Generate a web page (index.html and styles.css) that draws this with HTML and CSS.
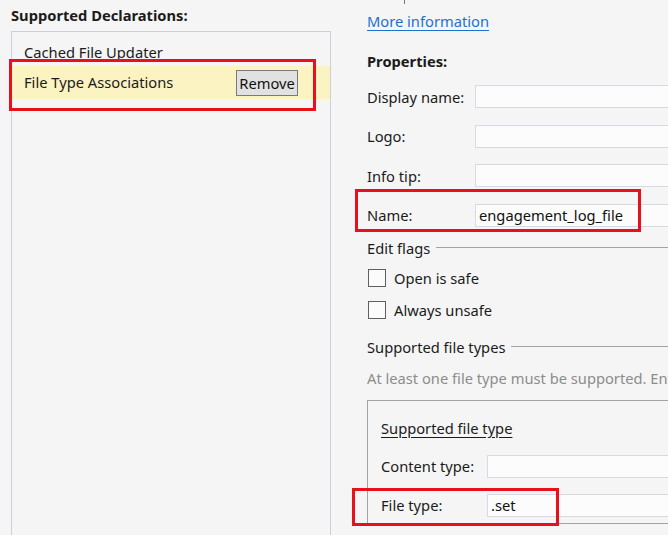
FILE: index.html
```html
<!DOCTYPE html>
<html>
<head>
<meta charset="utf-8">
<link rel="stylesheet" href="styles.css">
</head>
<body>
<div class="page">
  <div class="left">
    <div class="heading">Supported Declarations:</div>
    <div class="listbox">
      <div class="item">Cached File Updater</div>
      <div class="item selected">
        <span>File Type Associations</span>
        <button class="btn">Remove</button>
      </div>
    </div>
  </div>
  <div class="right">
    <div class="tick"></div>
    <a class="link" href="#">More information</a>
    <div class="section-title">Properties:</div>
    <div class="row"><span class="label">Display name:</span><div class="input"></div></div>
    <div class="row"><span class="label">Logo:</span><div class="input"></div></div>
    <div class="row"><span class="label">Info tip:</span><div class="input"></div></div>
    <div class="row marked-name"><span class="label">Name:</span><div class="input">engagement_log_file</div></div>
    <div class="group-title"><span>Edit flags</span><div class="rule"></div></div>
    <label class="check"><span class="box"></span>Open is safe</label>
    <label class="check"><span class="box"></span>Always unsafe</label>
    <div class="group-title types"><span>Supported file types</span><div class="rule"></div></div>
    <div class="hint">At least one file type must be supported. Enter at least one file type; for example, ".jpg".</div>
    <div class="typebox">
      <div class="typebox-title">Supported file type</div>
      <div class="row inner"><span class="label">Content type:</span><div class="input"></div></div>
      <div class="row inner marked-type"><span class="label">File type:</span><div class="input">.set</div></div>
    </div>
  </div>
</div>
</body>
</html>
```
FILE: styles.css
```css
html, body {
  margin: 0;
  padding: 0;
  background: #f5f5f5;
  overflow: hidden;
  width: 668px;
  height: 535px;
}
body {
  font-family: "Noto Sans", "Open Sans", sans-serif;
  font-size: 14.7px;
  color: #1b1b1b;
}
.page {
  display: flex;
  align-items: flex-start;
  width: 900px;
}
.left {
  width: 320px;
  padding-left: 11px;
  flex: none;
}
.heading {
  font-weight: bold;
  height: 20px;
  line-height: 20px;
  margin-top: 5px;
}
.listbox {
  margin-top: 6px;
  height: 560px;
  border: 1px solid #cfcfdc;
  box-sizing: border-box;
  padding-top: 7px;
}
.item {
  height: 33px;
  line-height: 33px;
  padding-left: 12px;
  display: flex;
  align-items: center;
  justify-content: space-between;
}
.item:first-child {
  height: 27px;
  line-height: 27px;
}
.item.selected {
  background: #fcf3c2;
  position: relative;
  padding-right: 32px;
}
.item.selected::after {
  content: "";
  position: absolute;
  left: -3px;
  top: -7px;
  width: 301px;
  height: 46px;
  border: 3px solid #e8111b;
}
.btn {
  font: inherit;
  font-size: 14.7px;
  color: #111;
  background: #e1e1e1;
  border: 1px solid #7a7a7a;
  height: 26px;
  width: 62px;
  padding: 0;
  line-height: 22px;
}
.right {
  margin-left: 36px;
  width: 480px;
  flex: none;
  display: flex;
  flex-direction: column;
  align-items: flex-start;
}
.tick {
  width: 1px;
  height: 4px;
  background: #8a6e6e;
  margin-left: 37px;
}
.link {
  color: #1a72d1;
  text-decoration: underline;
  text-underline-offset: 3px;
  line-height: 20px;
  margin-top: 7px;
}
.section-title {
  font-weight: bold;
  line-height: 20px;
  margin-top: 20px;
}
.row {
  display: flex;
  align-items: center;
  height: 23px;
  width: 100%;
  margin-top: 16.5px;
  position: relative;
}
.section-title + .row {
  margin-top: 14px;
}
.label {
  width: 108px;
  flex: none;
}
.input {
  flex: 1;
  height: 23px;
  box-sizing: border-box;
  border: 1px solid #d9d9e3;
  background: #fcfcfc;
  padding-left: 3px;
  line-height: 21px;
  color: #111;
}
.marked-name::after {
  content: "";
  position: absolute;
  left: -12px;
  top: -15px;
  width: 280px;
  height: 37px;
  border: 3px solid #e8111b;
}
.group-title {
  display: flex;
  align-items: center;
  width: 100%;
  margin-top: 11px;
  line-height: 20px;
}
.group-title .rule {
  flex: 1;
  height: 1px;
  background: #a3a3a3;
  margin-left: 6px;
}
.check {
  display: flex;
  align-items: center;
  line-height: 20px;
  height: 20px;
}
.check .box {
  width: 16px;
  height: 16px;
  border: 1px solid #5f5f5f;
  background: #fbfbfb;
  margin-right: 8px;
  margin-left: 1px;
}
.group-title + .check {
  margin-top: 10px;
}
.check + .check {
  margin-top: 12px;
}
.group-title.types {
  margin-top: 17px;
}
.hint {
  color: #8c8c8c;
  white-space: nowrap;
  line-height: 20px;
  margin-top: 11px;
}
.typebox {
  margin-top: 12px;
  width: 100%;
  box-sizing: border-box;
  border-left: 1px solid #a3a3a3;
  border-top: 1px solid #a3a3a3;
  border-bottom: 1px solid #a3a3a3;
  padding-left: 13px;
  height: 124px;
}
.typebox-title {
  text-decoration: underline;
  text-underline-offset: 3px;
  line-height: 20px;
  margin-top: 17px;
}
.row.inner {
  margin-top: 17px;
}
.row.inner .label {
  width: 106px;
}
.row.inner + .row.inner {
  margin-top: 16px;
}
.marked-type::after {
  content: "";
  position: absolute;
  left: -29px;
  top: -6px;
  width: 201px;
  height: 32px;
  border: 3px solid #e8111b;
}
```
